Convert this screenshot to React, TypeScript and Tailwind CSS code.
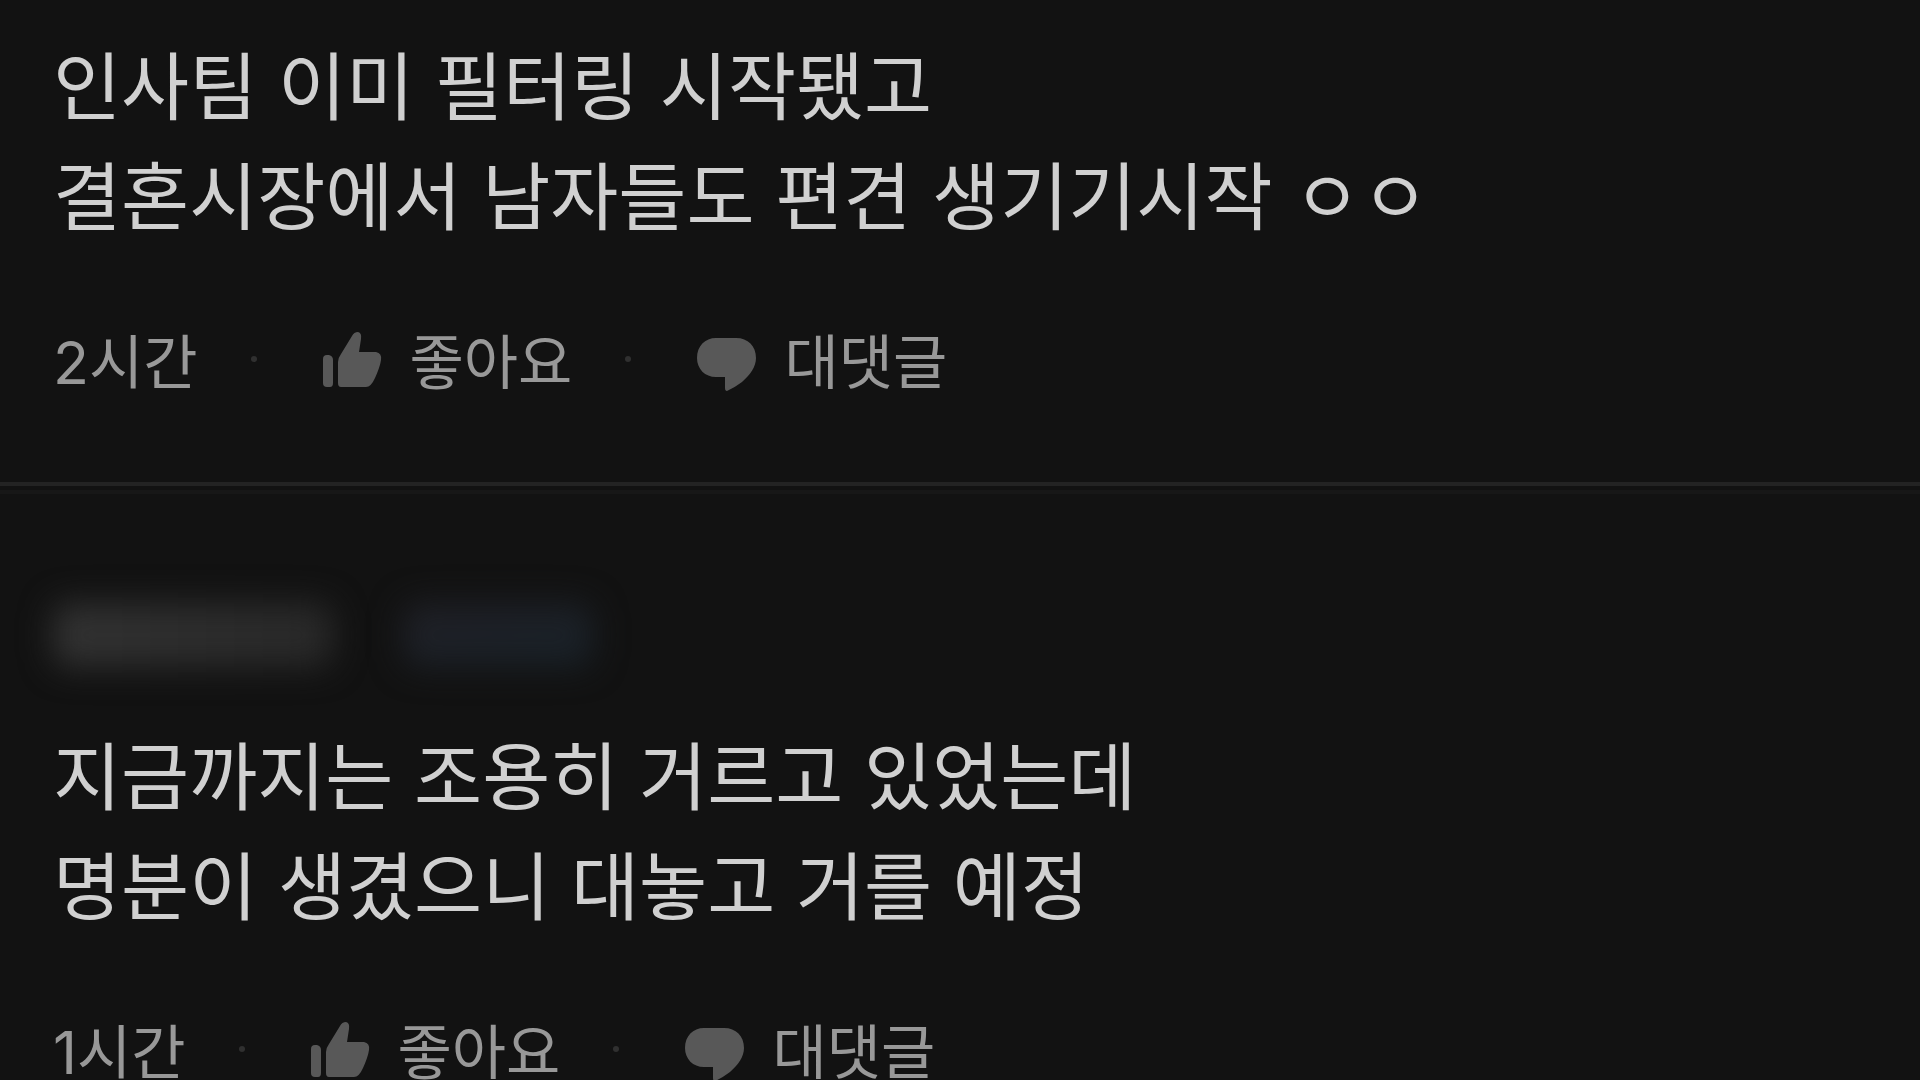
type Comment = {
  id: number;
  author: boolean;
  lines: string[];
  hours: number;
};

const comments: Comment[] = [
  {
    id: 1,
    author: false,
    lines: ["인사팀 이미 필터링 시작됐고", "결혼시장에서 남자들도 편견 생기기시작 ㅇㅇ"],
    hours: 2,
  },
  {
    id: 2,
    author: true,
    lines: ["지금까지는 조용히 거르고 있었는데", "명분이 생겼으니 대놓고 거를 예정"],
    hours: 1,
  },
];

function ThumbIcon() {
  return (
    <svg viewBox="0 0 60 64" className="h-16 w-[60px] shrink-0 fill-current" aria-hidden="true">
      <path d="M1 32Q1 28 5 28H7Q11 29 11 33V56Q11 60 8 60H5Q1 60 1 56Z" />
      <path d="M16 35Q16 31 19 27L30 9Q32 5 36 5Q40 6 39 12L37 25H54Q60 26 59 33Q58 40 53 51Q49 60 44 60H19Q16 60 16 56Z" />
    </svg>
  );
}

function BubbleIcon() {
  return (
    <svg viewBox="0 0 60 64" className="h-16 w-[60px] shrink-0 fill-current" aria-hidden="true">
      <path d="M20 11H40C52 11 60 19 60 31C60 40 54 48 46 55Q38 61 31 64Q29 64 29 61V50H20C9 50 1 42 1 31C1 19 9 11 20 11Z" />
    </svg>
  );
}

function Dot() {
  return <span className="ml-[53px] size-[6px] shrink-0 rounded-full bg-[#303030]" />;
}

function CommentItem({ comment }: { comment: Comment }) {
  return (
    <article className="px-[53px] pt-[27px]">
      {comment.author && (
        <div className="flex gap-[70px] pt-[82px] pb-[50px]">
          <span className="h-16 w-[280px] rounded-2xl bg-linear-to-r from-[#323232] to-[#282828] blur-lg" />
          <span className="h-16 w-[190px] rounded-2xl bg-linear-to-br from-[#202026] to-[#182128] blur-lg" />
        </div>
      )}

      <p className="text-[74px] leading-[110px] text-[#d0d0d0]">
        {comment.lines.map((line) => (
          <span key={line} className="block">
            {line}
          </span>
        ))}
      </p>

      <div className="mt-[66px] flex items-center text-[59px] leading-[92px] text-[#989898]">
        <time>
          <span className="font-['Inter',sans-serif] leading-none">{comment.hours}</span>
          시간
        </time>
        <Dot />
        <button type="button" className="ml-[65px] flex items-center gap-7">
          <span className="text-[#585858]">
            <ThumbIcon />
          </span>
          좋아요
        </button>
        <Dot />
        <button type="button" className="ml-[65px] flex items-center gap-7">
          <span className="text-[#585858]">
            <BubbleIcon />
          </span>
          대댓글
        </button>
      </div>
    </article>
  );
}

export default function App() {
  return (
    <main
      lang="ko"
      className="h-screen overflow-hidden bg-[#121212] font-['Noto_Sans_CJK_KR',sans-serif] font-normal"
    >
      <CommentItem comment={comments[0]} />
      <div className="mt-[77px] h-3 border-t-4 border-b-4 border-t-[#232323] border-b-[#171717]" />
      <CommentItem comment={comments[1]} />
    </main>
  );
}
